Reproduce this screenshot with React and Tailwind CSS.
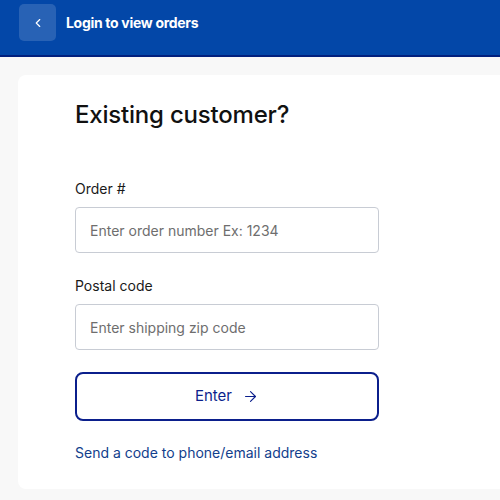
import { ChevronLeft, ArrowRight } from 'lucide-react';

const Field = ({ label, placeholder }) => (
  <div className="flex flex-col">
    <label className="text-[14px] leading-5 text-[#1a1a1a] mb-[8px]">{label}</label>
    <input
      type="text"
      placeholder={placeholder}
      className="h-[46px] w-[304px] rounded-[4px] border border-[#c8ccd4] bg-white px-[14px] text-[14px] text-[#222] placeholder:text-[#6e6e6e] outline-none"
    />
  </div>
);

const App = () => (
  <div className="w-[500px] h-[500px] overflow-hidden bg-[#f8f8f8]" style={{ fontFamily: 'Inter, "Noto Sans", sans-serif' }}>
    <header className="h-[57px] bg-[#0347a8] border-b-2 border-[#02207e] flex items-start pt-[4px] pl-[19px]">
      <button className="w-[37px] h-[37px] rounded-[5px] bg-white/15 flex items-center justify-center text-white">
        <ChevronLeft size={14} strokeWidth={2} />
      </button>
      <h1 className="ml-[10px] mt-[9px] text-[14px] leading-5 font-bold text-white tracking-[-0.3px]">Login to view orders</h1>
    </header>
    <div className="pl-[18px] pt-[18px]">
      <div className="w-[500px] h-[414px] bg-white rounded-[8px] pl-[57px] pt-[24px]">
        <h2 className="text-[24px] leading-8 font-medium text-[#111] tracking-[-0.2px]">Existing customer?</h2>
        <div className="mt-[48px] flex flex-col gap-[23px]">
          <Field label="Order #" placeholder="Enter order number Ex: 1234" />
          <Field label="Postal code" placeholder="Enter shipping zip code" />
        </div>
        <button className="mt-[22px] h-[49px] w-[304px] rounded-[8px] border-2 border-[#0b1f8c] flex items-center justify-center gap-[10px] text-[15px] text-[#0b1f8c]">
          Enter <ArrowRight size={17} strokeWidth={1.6} />
        </button>
        <a className="block mt-[22px] text-[14px] leading-5 text-[#12408c]">Send a code to phone/email address</a>
      </div>
    </div>
  </div>
);

export default App;
